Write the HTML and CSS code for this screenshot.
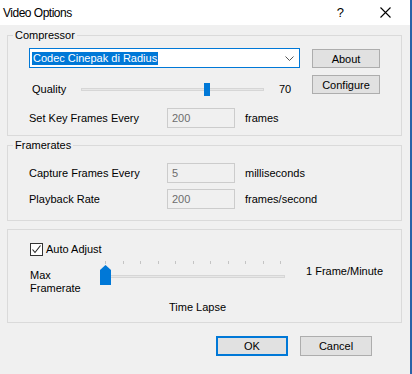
FILE: index.html
```html
<!DOCTYPE html>
<html>
<head>
<meta charset="utf-8">
<link rel="stylesheet" href="styles.css">
</head>
<body>
<div class="window">
  <div class="titlebar">
    <span class="title">Video Options</span>
    <span class="help">?</span>
    <svg class="close" width="11" height="11" viewBox="0 0 11 11"><path d="M0.5 0.5 L10.5 10.5 M10.5 0.5 L0.5 10.5" stroke="#000" stroke-width="1.1" fill="none"/></svg>
  </div>
  <div class="content">
    <fieldset class="group">
      <legend>Compressor</legend>
      <div class="comp">
        <div class="comp-left">
          <div class="combo">
            <span class="sel">Codec Cinepak di Radius</span>
            <svg class="chev" width="9" height="5" viewBox="0 0 9 5"><path d="M0.5 0.5 L4.5 4.5 L8.5 0.5" stroke="#555" fill="none"/></svg>
          </div>
          <div class="quality">
            <span class="qlabel">Quality</span>
            <div class="qslider">
              <div class="track"></div>
              <div class="qthumb"></div>
            </div>
            <span class="qval">70</span>
          </div>
          <div class="row kf">
            <span class="lbl">Set Key Frames Every</span>
            <div class="input">200</div>
            <span class="unit">frames</span>
          </div>
        </div>
        <div class="comp-right">
          <div class="btn">About</div>
          <div class="btn">Configure</div>
        </div>
      </div>
    </fieldset>

    <fieldset class="group">
      <legend>Framerates</legend>
      <div class="fr">
        <div class="row">
          <span class="lbl">Capture Frames Every</span>
          <div class="input">5</div>
          <span class="unit">milliseconds</span>
        </div>
        <div class="row">
          <span class="lbl">Playback Rate</span>
          <div class="input">200</div>
          <span class="unit">frames/second</span>
        </div>
      </div>
    </fieldset>

    <div class="group plain">
      <div class="check-row">
        <span class="checkbox"><svg width="11" height="11" viewBox="0 0 11 11"><path d="M1.5 5.5 L4 8.5 L9.5 1.5" stroke="#222" stroke-width="1.1" fill="none"/></svg></span>
        <span>Auto Adjust</span>
      </div>
      <div class="tl-row">
        <div class="maxlbl">Max<br>Framerate</div>
        <div class="tslider">
          <div class="ticks">
            <i></i><i></i><i></i><i></i><i></i><i></i><i></i><i></i><i></i><i></i><i></i>
          </div>
          <div class="track ttrack"></div>
          <svg class="tthumb" width="11" height="20" viewBox="0 0 11 20"><polygon points="0,5 5.5,0 11,5 11,20 0,20" fill="#0078d7"/></svg>
        </div>
        <div class="fpm">1 Frame/Minute</div>
      </div>
      <div class="timelapse">Time Lapse</div>
    </div>

    <div class="buttons">
      <div class="btn default">OK</div>
      <div class="btn">Cancel</div>
    </div>
  </div>
</div>
</body>
</html>
```

FILE: styles.css
```css
* { box-sizing: border-box; }
html, body {
  margin: 0;
  padding: 0;
  background: #f0f0f0;
}
body {
  font-family: "Liberation Sans", Arial, sans-serif;
  font-size: 11px;
  color: #000;
}
.window {
  width: 412px;
  height: 374px;
  border-right: 2px solid #2a62a8;
  background: #f0f0f0;
  overflow: hidden;
}
.titlebar {
  height: 25px;
  background: #fff;
  display: flex;
  align-items: center;
  padding-left: 3px;
}
.title {
  font-size: 12px;
  letter-spacing: -0.5px;
  flex: 1;
}
.help {
  font-size: 13px;
  margin-right: 36px;
}
.close {
  margin-right: 19px;
}
.content {
  padding: 3px 0 0 7px;
}
.group {
  width: 395px;
  margin: 0;
  padding: 0;
  border: 1px solid #dadada;
  min-width: 0;
}
.group legend {
  margin-left: 5px;
  padding: 0 2px;
  line-height: 14px;
}
.group + .group {
  margin-top: 2px;
}
.group.plain {
  margin-top: 8px;
  padding: 12px 0 8px 22px;
}

/* Compressor */
.comp {
  display: flex;
  padding: 6px 0 7px 21px;
}
.comp-left {
  width: 271px;
}
.comp-right {
  margin-left: 12px;
  padding-top: 1px;
  display: flex;
  flex-direction: column;
  gap: 7px;
}
.combo {
  height: 20px;
  border: 1px solid #0078d7;
  background: #fff;
  display: flex;
  align-items: center;
  padding-left: 2px;
}
.sel {
  background: #0078d7;
  color: #fff;
  line-height: 13px;
  padding: 0 1px;
}
.chev {
  margin-left: auto;
  margin-right: 5px;
}
.quality {
  margin-top: 10px;
  height: 22px;
  display: flex;
  align-items: center;
  padding-left: 3px;
}
.qlabel {
  width: 49px;
}
.qslider {
  position: relative;
  width: 183px;
  height: 22px;
  display: flex;
  align-items: center;
}
.track {
  height: 3px;
  width: 100%;
  background: #e7e7e7;
  border: 1px solid #d6d6d6;
}
.qthumb {
  position: absolute;
  left: 123px;
  top: 5px;
  width: 6px;
  height: 13px;
  background: #0078d7;
}
.qval {
  margin-left: 15px;
}
.row {
  display: flex;
  align-items: center;
  height: 20px;
}
.kf {
  margin-top: 8px;
}
.lbl {
  width: 138px;
}
.input {
  width: 68px;
  height: 20px;
  border: 1px solid #cccccc;
  background: #f0f0f0;
  color: #6d6d6d;
  padding-left: 4px;
  line-height: 18px;
}
.unit {
  margin-left: 10px;
}
.btn {
  width: 68px;
  height: 19px;
  background: #e1e1e1;
  border: 1px solid #adadad;
  display: flex;
  align-items: center;
  justify-content: center;
}

/* Framerates */
.fr {
  padding: 11px 0 11px 21px;
  display: flex;
  flex-direction: column;
  gap: 6px;
}

/* Auto adjust group */
.check-row {
  display: flex;
  align-items: center;
  height: 14px;
  gap: 3px;
}
.checkbox {
  width: 13px;
  height: 13px;
  border: 1px solid #333;
  background: #fff;
  display: flex;
  align-items: center;
  justify-content: center;
}
.tl-row {
  display: flex;
  align-items: flex-start;
  margin-top: 3px;
}
.maxlbl {
  width: 70px;
  margin-top: 10px;
  line-height: 13px;
}
.tslider {
  position: relative;
  width: 185px;
  height: 27px;
}
.ticks {
  display: flex;
  justify-content: space-between;
  padding: 0 4px 0 5px;
  margin-top: 2px;
}
.ticks i {
  display: block;
  width: 1px;
  height: 3px;
  background: #c4c4c4;
}
.ttrack {
  margin-top: 11px;
}
.tthumb {
  position: absolute;
  left: 0;
  top: 6px;
}
.fpm {
  margin-left: 21px;
  margin-top: 6px;
  line-height: 13px;
}
.timelapse {
  margin-top: 6px;
  line-height: 13px;
  padding-left: 139px;
}
.buttons {
  display: flex;
  justify-content: flex-end;
  gap: 12px;
  margin-top: 13px;
  width: 365px;
}
.buttons .btn {
  width: 72px;
  height: 20px;
}
.btn.default {
  border: 2px solid #0078d7;
}
```
